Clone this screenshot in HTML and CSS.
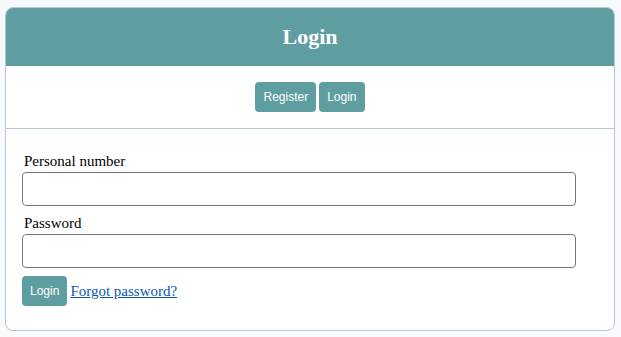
FILE: index.html
```html
<!DOCTYPE html>
<html lang="en">
<head>
    <meta charset="UTF-8">
    <meta name="viewport" content="width=device-width, initial-scale=1.0">
    <title>Login</title>
    <link rel="stylesheet" href="styles.css">
</head>
<body>
    <div class="card">
        <div class="card-header">
            <h2>Login</h2>
        </div>

        <div class="nav">
            <button class="btn">Register</button>
            <button class="btn">Login</button>
        </div>

        <form class="login-form">
            <label for="personalNumber">Personal number</label>
            <input type="text" id="personalNumber">

            <label for="password">Password</label>
            <input type="password" id="password">

            <div class="actions">
                <button type="button" class="btn">Login</button>
                <a href="#">Forgot password?</a>
            </div>
        </form>
    </div>
</body>
</html>
```

FILE: styles.css
```css
body {
    margin: 0;
    background: #f7f9fd;
    font-family: "Liberation Serif", "Times New Roman", serif;
}
.card {
    margin: 7px 6px 0 5px;
    background: #fff;
    border: 1px solid #b7c6d6;
    border-radius: 8px;
    overflow: hidden;
}
.card-header {
    background: #5f9ea0;
    height: 58px;
    display: flex;
    align-items: center;
    justify-content: center;
}
.card-header h2 {
    margin: 0;
    color: #fff;
    font-size: 22px;
    font-weight: bold;
}
.nav {
    display: flex;
    justify-content: center;
    gap: 3px;
    padding: 16px 0;
    border-bottom: 1px solid #b7c6d6;
}
.btn {
    height: 30px;
    padding: 0 8px;
    background: #5f9ea0;
    color: #fff;
    border: none;
    border-radius: 4px;
    font-family: "Liberation Sans", Arial, sans-serif;
    font-size: 12px;
}
.login-form {
    display: flex;
    flex-direction: column;
    align-items: flex-start;
    padding: 24px 16px 24px;
}
.login-form label {
    font-size: 15px;
    line-height: 17px;
    margin: 0 0 2px 2px;
}
.login-form input {
    box-sizing: border-box;
    width: 554px;
    height: 34px;
    border: 1px solid #777;
    border-radius: 4px;
    margin-bottom: 9px;
}
.actions {
    display: flex;
    align-items: center;
    gap: 3px;
    margin-top: -1px;
}
.actions a {
    color: #0b57b0;
    font-size: 15px;
}
```
